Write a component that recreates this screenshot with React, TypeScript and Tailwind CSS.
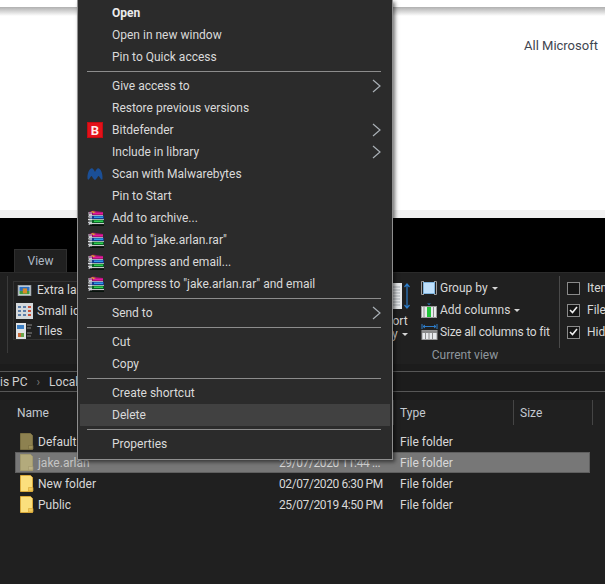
import React from "react";

function Chevron() {
  return (
    <svg width="9" height="14" viewBox="0 0 9 14" className="absolute right-[9px] top-[4px]" fill="none">
      <path d="M1 1 L8 7 L1 13" stroke="#a9b0b6" strokeWidth="1.2" />
    </svg>
  );
}

function RarIcon() {
  return (
    <svg width="18" height="17" viewBox="0 0 18 17">
      <path d="M2 2 L6 0.5 L16 2 L16 5 L3 5 Z" fill="#8f1266" />
      <rect x="6" y="2.5" width="10" height="1.8" fill="#e6189a" />
      <path d="M2 5 H16 V5.8 H2 Z" fill="#eef1f4" />
      <rect x="3" y="5.8" width="14" height="3.2" fill="#16398f" />
      <rect x="7" y="6.5" width="9" height="1.5" fill="#2f9be8" />
      <path d="M1 9 H17 V9.8 H1 Z" fill="#eef1f4" />
      <rect x="3" y="9.8" width="14" height="3.2" fill="#0b5f26" />
      <rect x="7" y="10.5" width="9" height="1.5" fill="#2fd050" />
      <path d="M2 13 H17 V13.8 H2 Z" fill="#eef1f4" />
      <path d="M1 3H5M1.5 4.6H5M1 6.2H5M1.5 7.8H5M1 9.4H5M1.5 11H5M1 12.6H5M1.5 14.2H5" stroke="#e4e8ec" strokeWidth="0.9" />
      <rect x="3" y="14.5" width="14" height="1.5" fill="#07130c" />
      <path d="M4 1 L9 2 L6 3 Z" fill="#e8c020" />
    </svg>
  );
}

function BitdefenderIcon() {
  return (
    <div className="w-[16px] h-[16px] bg-[#e2111a] border border-[#c40c12] flex items-center justify-center text-[13px] leading-none font-bold text-[#ffe9e9]">
      B
    </div>
  );
}

function MalwarebytesIcon() {
  return (
    <svg width="16" height="14" viewBox="0 0 16 13">
      <path
        d="M0.5 11 C0.3 6 2 1.5 4.5 0.8 C6 0.5 7 2.5 8 4.5 C9 2.5 10 0.5 11.5 0.8 C14 1.5 15.7 6 15.5 11 C15.4 12 14.6 12.6 14 11.8 L11.8 8.5 C11 8 10 11.5 8 12.5 C6 11.5 5 8 4.2 8.5 L2 11.8 C1.4 12.6 0.6 12 0.5 11 Z"
        fill="#1b4f96"
      />
    </svg>
  );
}

function Folder({ dim, selected }: { dim?: boolean; selected?: boolean }) {
  const body = selected ? "#b3aa7c" : dim ? "#8d8150" : "#fbdf7d";
  const edge = selected ? "#a39a6e" : dim ? "#7a6f42" : "#d9a93a";
  const pocket = selected ? "#bdb388" : dim ? "#9c9059" : "#f2c95a";
  return (
    <svg width="14" height="17" viewBox="0 0 14 17">
      <path d="M0.5 0.5 H10.5 L12.5 2.5 V16.5 H0.5 Z" fill={body} stroke={edge} />
      <path d="M8.5 16 V12.5 H13 V16 Z" fill={pocket} stroke={edge} strokeWidth="0.7" />
    </svg>
  );
}

function Sep() {
  return (
    <div className="h-[7px] flex items-center pl-[9px] pr-[11px]">
      <div className="h-px w-full bg-[#8c8c8c]" />
    </div>
  );
}

function Row({ label, icon, sub, bold, hot }: { label: string; icon?: React.ReactNode; sub?: boolean; bold?: boolean; hot?: boolean }) {
  return (
    <div className={`relative h-[22px] flex items-center pl-[32px] mx-[2px] ${hot ? "bg-[#414141]" : ""} ${bold ? "font-bold text-[#ececec]" : ""}`}>
      {icon && <span className="absolute left-[7px] top-0 h-full w-[20px] flex items-center">{icon}</span>}
      {label}
      {sub && <Chevron />}
    </div>
  );
}

function ContextMenu() {
  return (
    <div className="absolute left-[77px] top-0 w-[316px] h-[460px] pt-[2px] bg-[#2b2b2b] border-x border-b border-[#8f8f8f] text-[#dadada] shadow-[2px_2px_4px_rgba(0,0,0,0.55)]">
      <Row label="Open" bold />
      <Row label="Open in new window" />
      <Row label="Pin to Quick access" />
      <Sep />
      <Row label="Give access to" sub />
      <Row label="Restore previous versions" />
      <Row label="Bitdefender" sub icon={<BitdefenderIcon />} />
      <Row label="Include in library" sub />
      <Row label="Scan with Malwarebytes" icon={<MalwarebytesIcon />} />
      <Row label="Pin to Start" />
      <Row label="Add to archive..." icon={<RarIcon />} />
      <Row label={'Add to "jake.arlan.rar"'} icon={<RarIcon />} />
      <Row label="Compress and email..." icon={<RarIcon />} />
      <Row label={'Compress to "jake.arlan.rar" and email'} icon={<RarIcon />} />
      <Sep />
      <Row label="Send to" sub />
      <Sep />
      <Row label="Cut" />
      <Row label="Copy" />
      <Sep />
      <Row label="Create shortcut" />
      <Row label="Delete" hot />
      <Sep />
      <Row label="Properties" />
    </div>
  );
}

function LayoutIcon({ kind }: { kind: "large" | "small" | "tiles" }) {
  if (kind === "large") {
    return (
      <svg width="15" height="11" viewBox="0 0 16 13">
        <rect x="0.5" y="0.5" width="15" height="12" fill="#e8ecef" stroke="#9aa3aa" />
        <rect x="2" y="2" width="12" height="5" fill="#2c6fc0" />
        <rect x="2" y="7" width="12" height="4" fill="#3f9a3f" />
        <rect x="6" y="4" width="5" height="6" fill="#d88a2a" />
      </svg>
    );
  }
  if (kind === "small") {
    return (
      <svg width="17" height="16" viewBox="0 0 17 16">
        <rect width="17" height="16" fill="#d5d9dc" />
        <path d="M2 3h3v2H2z M7 3h3v2H7z M2 7h3v2H2z M7 7h3v2H7z M2 11h3v2H2z M7 11h3v2H7z" fill="#5d7ea8" />
        <path d="M12 3h3v2h-3z M12 7h3v2h-3z M12 11h3v2h-3z" fill="#c9503a" />
      </svg>
    );
  }
  return (
    <svg width="17" height="16" viewBox="0 0 17 16">
      <rect width="10" height="16" fill="#dfe3e6" />
      <rect x="1" y="2" width="7" height="4" fill="#3c7fc4" />
      <rect x="2" y="10" width="3" height="4" fill="#c96a3a" />
      <rect x="5" y="10" width="3" height="4" fill="#6aa54a" />
      <path d="M11 2h5M11 5h4M11 10h5M11 13h4" stroke="#8a8a8a" />
    </svg>
  );
}

function Caret() {
  return <span className="inline-block ml-[4px] mb-[2px] border-x-[3px] border-t-[3px] border-x-transparent border-t-[#d5d5d5]" />;
}

function ViewGroup() {
  return (
    <div className="w-[380px] shrink-0 h-full pl-[7px] flex">
      <div className="w-px h-[77px] mt-[3px] bg-[#3a3a3a]" />
      <div className="ml-[5px] mt-[8px] w-[120px] h-[59px] border border-[#333333] flex flex-col justify-center pl-[2px]">
        {[
          { kind: "large" as const, label: "Extra large icons" },
          { kind: "small" as const, label: "Small icons" },
          { kind: "tiles" as const, label: "Tiles" },
        ].map((it) => (
          <div key={it.label} className="flex items-center shrink-0 h-[20.5px] gap-[4px]">
            <span className="w-[17px] flex justify-center"><LayoutIcon kind={it.kind} /></span>
            {it.label}
          </div>
        ))}
      </div>
    </div>
  );
}

function SortColumn() {
  return (
    <div className="w-[33px] shrink-0 flex flex-col items-center h-full">
      <svg width="33" height="28" viewBox="0 0 33 28" className="mt-[9px] shrink-0">
        <rect x="3" y="1" width="19" height="26" fill="#e6e8ea" />
        <path d="M5 5H20M5 8H20M5 11H20M5 14H20M5 17H20M5 20H20M5 23H20" stroke="#aab0b5" />
        <path d="M27 2V26M24.5 5L27 2L29.5 5M24.5 23L27 26L29.5 23" stroke="#2d7cc8" strokeWidth="1.2" fill="none" />
      </svg>
      <div className="mt-[5px] h-[13px] leading-[13px]">Sort</div>
      <div className="h-[13px] leading-[13px]">by<Caret /></div>
    </div>
  );
}

function CurrentView() {
  return (
    <div className="w-[138px] shrink-0 h-full ml-[8px] flex flex-col">
      <div className="mt-[4px] flex flex-col">
        <div className="flex items-center h-[22px] gap-[3px]">
          <svg width="16" height="14" viewBox="0 0 16 14">
            <path d="M3 0.5H0.5V13.5H3M13 0.5H15.5V13.5H13" stroke="#9a9a9a" fill="none" />
            <rect x="2.5" y="1.5" width="11" height="11" fill="#bfe0fb" stroke="#7fb4de" />
          </svg>
          <span>Group by<Caret /></span>
        </div>
        <div className="flex items-center h-[22px] gap-[3px]">
          <svg width="16" height="15" viewBox="0 0 16 15">
            <path d="M6 0.5H10L8 2Z" fill="#2d7cc8" />
            <rect x="0.5" y="3.5" width="15" height="11" fill="#e8eaec" stroke="#9a9a9a" />
            <rect x="6" y="4" width="4" height="10" fill="#22c43a" />
            <path d="M3 4V14M12.5 4V14" stroke="#8a8a8a" />
          </svg>
          <span>Add columns<Caret /></span>
        </div>
        <div className="flex items-center h-[22px] gap-[2px]">
          <svg width="17" height="16" viewBox="0 0 17 16">
            <path d="M1 0V5M16 0V5M2 2.5H15M4 1L2 2.5L4 4M13 1L15 2.5L13 4" stroke="#2d7cc8" fill="none" />
            <rect x="1" y="6.5" width="15" height="9" fill="#e8eaec" stroke="#9a9a9a" />
            <rect x="1" y="6.5" width="15" height="2.5" fill="#8a8a8a" />
            <path d="M4.5 9V15M8 9V15M11.5 9V15" stroke="#8a8a8a" />
          </svg>
          <span className="whitespace-nowrap tracking-[-0.2px]">Size all columns to fit</span>
        </div>
      </div>
      <div className="mt-[6px] w-[88px] text-center whitespace-nowrap text-[#8f979e]">Current view</div>
    </div>
  );
}

function ShowHide() {
  const rows = [
    { label: "Item", on: false },
    { label: "File", on: true },
    { label: "Hid", on: true },
  ];
  return (
    <div className="flex h-full">
      <div className="w-px h-[72px] mt-[3px] bg-[#4a4a4a]" />
      <div className="ml-[7px] mt-[4px] flex flex-col">
        {rows.map((r) => (
          <div key={r.label} className="flex items-center h-[22px] gap-[7px] whitespace-nowrap">
            <span className="w-[13px] h-[13px] border border-[#8a8a8a] bg-[#151515] flex items-center justify-center">
              {r.on && (
                <svg width="9" height="8" viewBox="0 0 9 8">
                  <path d="M1 4L3.5 6.5L8 1" stroke="#f0f0f0" strokeWidth="1.6" fill="none" />
                </svg>
              )}
            </span>
            {r.label}
          </div>
        ))}
      </div>
    </div>
  );
}

const files = [
  { name: "Default", date: "29/07/2020 11:44 ...", dim: true },
  { name: "jake.arlan", date: "29/07/2020 11:44 ...", dim: true, selected: true },
  { name: "New folder", date: "02/07/2020 6:30 PM" },
  { name: "Public", date: "25/07/2019 4:50 PM" },
];

function FileList() {
  return (
    <div className="flex-1 bg-[#202020] pl-[15px]">
      <div className="h-[25px] flex items-center text-[#c4cad0]">
        <div className="w-[378px] pl-[2px] h-full flex items-center">Name</div>
        <div className="w-[120px] pl-[6px] h-full flex items-center border-l border-[#454545]">Type</div>
        <div className="w-[80px] pl-[6px] h-full flex items-center border-x border-[#454545]">Size</div>
      </div>
      <div className="mt-[6px] w-[575px] flex flex-col">
        {files.map((f) => (
          <div
            key={f.name}
            className={`h-[21px] flex items-center border ${f.selected ? "bg-[#777777] border-[#5f5f5f]" : "border-transparent"}`}
          >
            <span className="w-[18px] ml-[4px] flex"><Folder dim={f.dim} selected={f.selected} /></span>
            <span className={`w-[241px] whitespace-nowrap ${f.selected ? "text-[#c4c4c4]" : ""}`}>{f.name}</span>
            <span className="w-[121px] whitespace-nowrap tracking-[-0.4px]">{f.date}</span>
            <span>File folder</span>
          </div>
        ))}
      </div>
    </div>
  );
}

export default function App() {
  return (
    <div className="relative w-[605px] h-[584px] overflow-hidden flex flex-col bg-[#202020] text-[12px] leading-none text-[#d8d8d8] [font-family:Roboto,'Noto_Sans',sans-serif]">
      <div className="h-[218px] shrink-0 bg-white flex flex-col">
        <div className="h-[7px] shrink-0" />
        <div className="h-[9px] shrink-0 bg-gradient-to-b from-[#b0b0b0] to-white" />
        <div className="mt-[23px] ml-[524px] text-[#3f4550] whitespace-nowrap text-[13px]">All Microsoft</div>
        <div className="mt-auto h-[8px] bg-[#f2f2f2]" />
      </div>
      <div className="h-[54px] shrink-0 bg-black flex items-end pl-[14px]">
        <div className="w-[53px] h-[23px] bg-[#202020] border-x border-t border-[#2f2f2f] flex items-center justify-center text-[#aeb9c4]">View</div>
      </div>
      <div className="h-[92px] shrink-0 bg-[#202020] flex border-t border-[#2a2a2a]">
        <ViewGroup />
        <SortColumn />
        <CurrentView />
        <ShowHide />
      </div>
      <div className="h-[7px] shrink-0 bg-[#1c1c1c]" />
      <div className="h-[21px] shrink-0 border-y border-[#565656] bg-[#1c1c1c] flex items-center text-[#d0d0d0] whitespace-nowrap">
        <span>is PC</span>
        <span className="mx-[9px] text-[#777]">&#8250;</span>
        <span>Local Disk (C:)</span>
      </div>
      <div className="h-[8px] shrink-0 bg-[#1c1c1c]" />
      <FileList />
      <ContextMenu />
    </div>
  );
}
